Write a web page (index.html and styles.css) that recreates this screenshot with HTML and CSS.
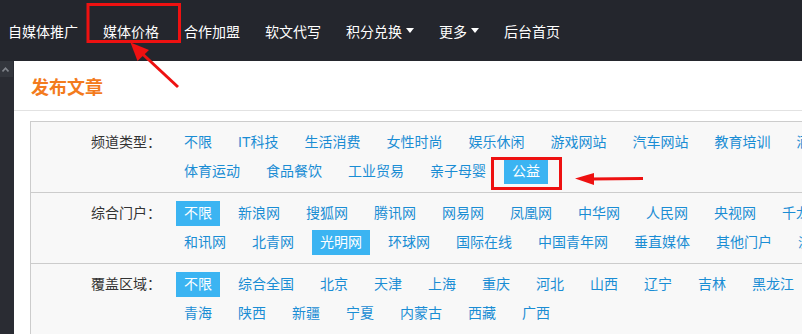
FILE: index.html
```html
<!DOCTYPE html>
<html>
	<head>
		<meta charset="UTF-8">
		<title>发布文章</title>
		<link rel="stylesheet" href="styles.css">
	</head>
	<body>
		<div class="topbar">
			<a class="nav">自媒体推广</a>
			<a class="nav">媒体价格</a>
			<a class="nav">合作加盟</a>
			<a class="nav">软文代写</a>
			<a class="nav">积分兑换<i class="caret"></i></a>
			<a class="nav">更多<i class="caret"></i></a>
			<a class="nav">后台首页</a>
		</div>
		<div class="main">
			<div class="sidebar">
				<div class="side-top">
					<svg width="7" height="5" viewBox="0 0 7 5"><path d="M0.5 4.5 L3.5 1.2 L6.5 4.5" fill="none" stroke="#80848b" stroke-width="1.6"/></svg>
				</div>
			</div>
			<div class="content">
				<div class="title">发布文章</div>
				<div class="panel">
					<div class="row">
						<div class="label">频道类型：</div>
						<div class="opts">
							<div class="line">
								<a class="opt">不限</a>
								<a class="opt">IT科技</a>
								<a class="opt">生活消费</a>
								<a class="opt">女性时尚</a>
								<a class="opt">娱乐休闲</a>
								<a class="opt">游戏网站</a>
								<a class="opt">汽车网站</a>
								<a class="opt">教育培训</a>
								<a class="opt">酒店旅游</a>
							</div>
							<div class="line">
								<a class="opt">体育运动</a>
								<a class="opt">食品餐饮</a>
								<a class="opt">工业贸易</a>
								<a class="opt">亲子母婴</a>
								<a class="opt active">公益</a>
							</div>
						</div>
					</div>
					<div class="row">
						<div class="label">综合门户：</div>
						<div class="opts">
							<div class="line">
								<a class="opt active">不限</a>
								<a class="opt">新浪网</a>
								<a class="opt">搜狐网</a>
								<a class="opt">腾讯网</a>
								<a class="opt">网易网</a>
								<a class="opt">凤凰网</a>
								<a class="opt">中华网</a>
								<a class="opt">人民网</a>
								<a class="opt">央视网</a>
								<a class="opt">千龙网</a>
							</div>
							<div class="line">
								<a class="opt">和讯网</a>
								<a class="opt">北青网</a>
								<a class="opt active">光明网</a>
								<a class="opt">环球网</a>
								<a class="opt">国际在线</a>
								<a class="opt">中国青年网</a>
								<a class="opt">垂直媒体</a>
								<a class="opt">其他门户</a>
								<a class="opt">派</a>
							</div>
						</div>
					</div>
					<div class="row">
						<div class="label">覆盖区域：</div>
						<div class="opts">
							<div class="line">
								<a class="opt active">不限</a>
								<a class="opt">综合全国</a>
								<a class="opt">北京</a>
								<a class="opt">天津</a>
								<a class="opt">上海</a>
								<a class="opt">重庆</a>
								<a class="opt">河北</a>
								<a class="opt">山西</a>
								<a class="opt">辽宁</a>
								<a class="opt">吉林</a>
								<a class="opt">黑龙江</a>
							</div>
							<div class="line">
								<a class="opt">青海</a>
								<a class="opt">陕西</a>
								<a class="opt">新疆</a>
								<a class="opt">宁夏</a>
								<a class="opt">内蒙古</a>
								<a class="opt">西藏</a>
								<a class="opt">广西</a>
							</div>
						</div>
					</div>
				</div>
			</div>
		</div>
		<svg class="marks" width="802" height="334" viewBox="0 0 802 334">
			<rect x="88" y="4.5" width="91.5" height="37" fill="none" stroke="#ee1111" stroke-width="3"/>
			<line x1="178" y1="87" x2="142" y2="53.5" stroke="#ee1111" stroke-width="3"/>
			<polygon points="130.5,42.5 149,50 137.5,61" fill="#ee1111"/>
			<rect x="492.5" y="158.5" width="68" height="30" fill="none" stroke="#ee1111" stroke-width="3"/>
			<line x1="590" y1="179" x2="643" y2="178.5" stroke="#ee1111" stroke-width="3"/>
			<polygon points="575,178.5 594,173 594,185" fill="#ee1111"/>
		</svg>
	</body>
</html>
```
FILE: styles.css
```css
body{
	margin: 0;
	width: 802px;
	height: 334px;
	overflow: hidden;
	position: relative;
	font-family: "Liberation Sans", "Noto Sans CJK SC", sans-serif;
	font-size: 14px;
	color: #333;
	background: #fff;
}
a{
	text-decoration: none;
	cursor: pointer;
}
.topbar{
	height: 61px;
	background: #24262d;
	display: flex;
	align-items: center;
	padding-left: 8px;
	white-space: nowrap;
}
.nav{
	color: #fff;
	margin-right: 25px;
	display: flex;
	align-items: center;
}
.caret{
	display: inline-block;
	width: 0;
	height: 0;
	margin-left: 4px;
	border-top: 5px solid #fff;
	border-left: 4px solid transparent;
	border-right: 4px solid transparent;
}
.main{
	display: flex;
	height: 273px;
}
.sidebar{
	width: 14px;
	flex: none;
	background: #2a2c33;
}
.side-top{
	height: 16px;
	width: 13px;
	background: #33363d;
	display: flex;
	align-items: center;
	justify-content: center;
}
.side-top svg{
	display: block;
	margin-right: 3px;
}
.content{
	flex: 1;
	min-width: 0;
}
.title{
	padding: 15px 17px 9px;
	line-height: 25px;
	font-size: 18px;
	font-weight: bold;
	color: #f37b1d;
	border-bottom: 1px solid #e2e2e2;
}
.panel{
	margin: 10px 0 0 16px;
	width: 1100px;
	border: 1px solid #ccc;
	background: #f8f8f8;
}
.row{
	display: flex;
	padding: 8px 0 4px;
	border-bottom: 1px solid #ccc;
}
.label{
	width: 130px;
	flex: none;
	text-align: right;
	line-height: 25px;
	color: #333;
}
.opts{
	margin-left: 15px;
}
.line{
	display: flex;
	white-space: nowrap;
	margin-bottom: 4px;
}
.opt{
	height: 25px;
	line-height: 25px;
	padding: 0 8px;
	margin-right: 10px;
	color: #1a8dd4;
}
.opt.active{
	background: #3bb4f2;
	color: #fff;
}
.marks{
	position: absolute;
	left: 0;
	top: 0;
	pointer-events: none;
}
```
